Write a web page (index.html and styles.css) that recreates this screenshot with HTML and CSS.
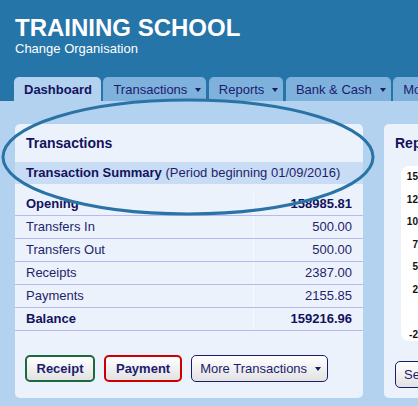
FILE: index.html
```html
<!DOCTYPE html>
<html>
<head>
<meta charset="utf-8">
<link rel="stylesheet" href="styles.css">
</head>
<body>
<header class="header">
  <div class="org-title">TRAINING SCHOOL</div>
  <div class="org-change">Change Organisation</div>
  <nav class="tabs">
    <div class="tab active">Dashboard</div>
    <div class="tab">Transactions<span class="caret"></span></div>
    <div class="tab">Reports<span class="caret"></span></div>
    <div class="tab">Bank &amp; Cash<span class="caret"></span></div>
    <div class="tab">More<span class="caret"></span></div>
  </nav>
</header>
<main class="dash">
  <section class="panel">
    <h2 class="panel-title">Transactions</h2>
    <div class="summary"><b>Transaction Summary</b> (Period beginning 01/09/2016)</div>
    <table class="ledger">
      <tr class="strong"><td>Opening</td><td class="num">158985.81</td></tr>
      <tr><td>Transfers In</td><td class="num">500.00</td></tr>
      <tr><td>Transfers Out</td><td class="num">500.00</td></tr>
      <tr><td>Receipts</td><td class="num">2387.00</td></tr>
      <tr><td>Payments</td><td class="num">2155.85</td></tr>
      <tr class="strong"><td>Balance</td><td class="num">159216.96</td></tr>
    </table>
    <div class="actions">
      <button class="btn btn-receipt">Receipt</button>
      <button class="btn btn-payment">Payment</button>
      <button class="btn btn-more">More Transactions<span class="caret"></span></button>
    </div>
  </section>
  <section class="panel">
    <h2 class="panel-title">Reports</h2>
    <div class="chart">
      <div class="axis">
        <span>150,000</span><span>125,000</span><span>100,000</span><span>75,000</span><span>50,000</span><span>25,000</span><span>0</span><span>-25,000</span>
      </div>
    </div>
    <div class="actions actions-tight">
      <button class="btn btn-more">See all</button>
    </div>
  </section>
  <section class="panel panel-low"></section>
  <section class="panel panel-low"></section>
</main>
<svg class="annot" width="418" height="406" viewBox="0 0 418 406">
  <ellipse cx="188" cy="157" rx="185" ry="57" fill="none" stroke="#2a73a6" stroke-width="3"/>
</svg>
</body>
</html>
```
FILE: styles.css
```css
html, body {
  margin: 0;
  padding: 0;
  overflow: hidden;
}
body {
  width: 418px;
  height: 406px;
  background: #b3d2ef;
  font-family: "Liberation Sans", Arial, sans-serif;
  color: #1f1f6a;
  position: relative;
}
.header {
  background: #2675a8;
  padding: 14px 0 0 15px;
  color: #fff;
}
.org-title {
  font-size: 24px;
  font-weight: bold;
  line-height: 27px;
}
.org-change {
  font-size: 13px;
  line-height: 16px;
}
.tabs {
  display: flex;
  gap: 2.5px;
  margin: 20px 0 0 -1px;
  white-space: nowrap;
}
.tab {
  flex: none;
  display: flex;
  align-items: center;
  height: 24px;
  padding: 1px 5px 0 10px;
  box-sizing: border-box;
  background: #7eb2dd;
  border-radius: 5px 5px 0 0;
  font-size: 13px;
  color: #1c1c6e;
  line-height: 22px;
}
.tab.active {
  background: #b3d2ef;
  font-weight: bold;
  padding: 1px 9px 0 10px;
  color: #141460;
}
.caret {
  display: inline-block;
  width: 0;
  height: 0;
  border-left: 3.5px solid transparent;
  border-right: 3.5px solid transparent;
  border-top: 4px solid #1a1a66;
  margin-left: 8px;
}
.dash {
  display: grid;
  grid-template-columns: 348px 348px;
  column-gap: 21px;
  row-gap: 11px;
  padding: 23px 0 0 15px;
}
.panel {
  background: #ecf2fc;
  border-radius: 5px;
  padding-bottom: 10px;
}
.panel-low {
  height: 80px;
}
.panel-title {
  margin: 0;
  padding: 10px 11px;
  font-size: 14px;
  line-height: 18px;
  font-weight: bold;
  color: #13135c;
  white-space: nowrap;
}
.summary {
  background: #c9dcf6;
  height: 22px;
  line-height: 22px;
  padding: 0 11px;
  font-size: 13px;
  color: #1f1f6a;
  white-space: nowrap;
}
.summary b {
  color: #13135c;
}
.ledger {
  width: 100%;
  border-collapse: collapse;
  margin-top: 9px;
  font-size: 13px;
}
.ledger td {
  height: 22px;
  padding: 0 11px;
  line-height: 22px;
  border-bottom: 1px solid #b9b9f0;
}
.ledger td:first-child {
  border-right: 1px solid #f8faff;
}
.ledger td.num {
  text-align: right;
  width: 87px;
}
.ledger tr.strong td {
  font-weight: bold;
  color: #13135c;
}
.actions {
  display: flex;
  gap: 9px;
  padding: 24px 10px 0;
}
.actions-tight {
  padding: 20px 0 0 11px;
}
.btn {
  height: 27px;
  padding: 0 9.5px;
  border-radius: 5px;
  border: 2px solid #1c1c6e;
  background: linear-gradient(#ffffff, #e2e2e2);
  font-family: "Liberation Sans", Arial, sans-serif;
  font-size: 13px;
  color: #1c1c6e;
  display: flex;
  align-items: center;
  white-space: nowrap;
  flex: none;
}
.btn-receipt {
  border-color: #1b6b3c;
  font-weight: bold;
}
.btn-payment {
  border-color: #cc0000;
  font-weight: bold;
  padding: 0 10px;
}
.btn-more {
  border-width: 1px;
  padding: 0 6px 0 8px;
}
.btn-more .caret {
  margin-left: 8px;
}
.chart {
  margin: 4px 0 0 17px;
  height: 175px;
  background: #ffffff;
  border-radius: 8px;
  padding: 0 0 0 4px;
  box-sizing: border-box;
}
.axis {
  display: flex;
  flex-direction: column;
  width: 38px;
  text-align: right;
  font-size: 10px;
  line-height: 22.5px;
  color: #111;
  font-weight: bold;
}
.axis span {
  white-space: nowrap;
}
.annot {
  position: absolute;
  left: 0;
  top: 0;
  pointer-events: none;
}
```
